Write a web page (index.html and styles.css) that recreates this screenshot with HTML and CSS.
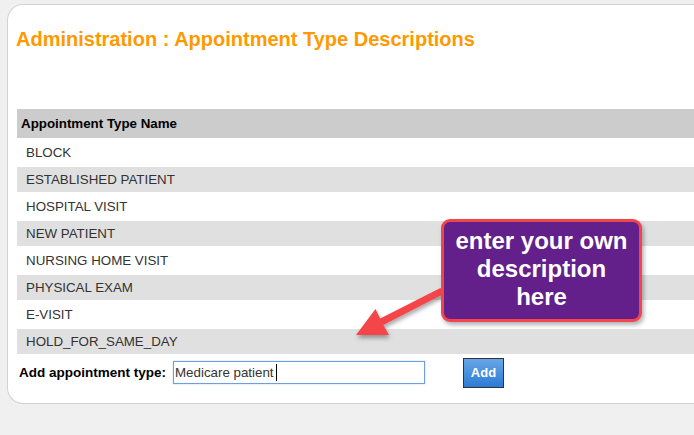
FILE: index.html
```html
<!DOCTYPE html>
<html>
<head>
<meta charset="utf-8">
<link rel="stylesheet" href="styles.css">
</head>
<body>
<div class="panel">
  <h1 class="title">Administration : Appointment Type Descriptions</h1>
  <table class="types">
    <thead>
      <tr><th>Appointment Type Name</th></tr>
    </thead>
    <tbody>
      <tr><td>BLOCK</td></tr>
      <tr class="alt"><td>ESTABLISHED PATIENT</td></tr>
      <tr><td>HOSPITAL VISIT</td></tr>
      <tr class="alt"><td>NEW PATIENT</td></tr>
      <tr><td>NURSING HOME VISIT</td></tr>
      <tr class="alt"><td>PHYSICAL EXAM</td></tr>
      <tr><td>E-VISIT</td></tr>
      <tr class="alt"><td>HOLD_FOR_SAME_DAY</td></tr>
    </tbody>
  </table>
  <div class="add-row">
    <label class="add-label" for="newtype">Add appointment type:</label>
    <span class="input-wrap">
      <input id="newtype" class="add-input" type="text" value="Medicare patient">
      <span class="caret"></span>
    </span>
    <button class="add-btn" type="button">Add</button>
  </div>
</div>

<svg class="arrow" width="110" height="70" viewBox="0 0 110 70">
  <defs>
    <filter id="sh" x="-20%" y="-20%" width="150%" height="160%">
      <feDropShadow dx="1" dy="3" stdDeviation="2" flood-color="#000" flood-opacity="0.35"/>
    </filter>
  </defs>
  <polygon filter="url(#sh)" fill="#f44549" points="16,55 35.5,29 40.2,38.6 100.4,7.9 103.6,14.1 43.4,44.9 49,55"/>
</svg>
<div class="callout">enter your own<br>description<br>here</div>
</body>
</html>
```

FILE: styles.css
```css
html, body {
  margin: 0;
  padding: 0;
  background: #f0f0f0;
  overflow: hidden;
}
body {
  position: relative;
  width: 694px;
  height: 435px;
  overflow: hidden;
  font-family: "Liberation Sans", Arial, sans-serif;
}
.panel {
  margin: 4px -20px 0 7px;
  height: 400px;
  box-sizing: border-box;
  background: #fff;
  border: 1px solid #d2d2d2;
  border-right: none;
  border-radius: 16px 0 0 16px;
  padding: 0 0 0 8px;
}
.title {
  margin: 22px 0 0 0;
  font-size: 20px;
  line-height: 24px;
  font-weight: bold;
  color: #ff9900;
}
.types {
  margin: 56px 0 0 1px;
  width: 100%;
  border-collapse: separate;
  border-spacing: 0 2px;
  font-size: 13.33px;
}
.types th {
  background: #cccccc;
  color: #000;
  text-align: left;
  font-weight: bold;
  height: 29px;
  padding: 0 0 0 4px;
  box-sizing: border-box;
}
.types td {
  height: 25px;
  padding: 0 0 0 9px;
  color: #333;
  box-sizing: border-box;
}
.types tr.alt td {
  background: #e0e0e0;
}
.add-row {
  display: flex;
  align-items: center;
  margin: 1px 0 0 3px;
  height: 31px;
}
.add-label {
  font-size: 13.5px;
  font-weight: bold;
  color: #000;
  margin-right: 7px;
}
.input-wrap {
  position: relative;
  display: inline-block;
}
.add-input {
  display: block;
  width: 252px;
  height: 23px;
  box-sizing: border-box;
  border: 1px solid #6f9de4;
  box-shadow: 0 0 1px 0 #8fb4ec;
  padding: 0 0 0 1px;
  font-family: "Liberation Sans", Arial, sans-serif;
  font-size: 13.33px;
  color: #333;
  outline: none;
  margin: 0;
}
.caret {
  position: absolute;
  left: 103px;
  top: 3px;
  width: 1px;
  height: 17px;
  background: #000;
}
.add-btn {
  margin-left: 38px;
  width: 41px;
  height: 30px;
  box-sizing: border-box;
  border: 1px solid #333;
  background: linear-gradient(#68a6e6, #2b7bd5);
  color: #fff;
  font-family: "Liberation Sans", Arial, sans-serif;
  font-weight: bold;
  font-size: 13px;
  padding: 0;
}
.arrow {
  position: absolute;
  left: 340px;
  top: 280px;
}
.callout {
  position: absolute;
  left: 441px;
  top: 219px;
  width: 201px;
  height: 103px;
  box-sizing: border-box;
  border: 3px solid #f2454b;
  border-radius: 9px;
  background: #63208a;
  box-shadow: 2px 3px 4px rgba(0, 0, 0, 0.3);
  color: #fff;
  font-weight: bold;
  font-size: 24px;
  line-height: 28px;
  text-align: center;
  padding-top: 5px;
}
```
